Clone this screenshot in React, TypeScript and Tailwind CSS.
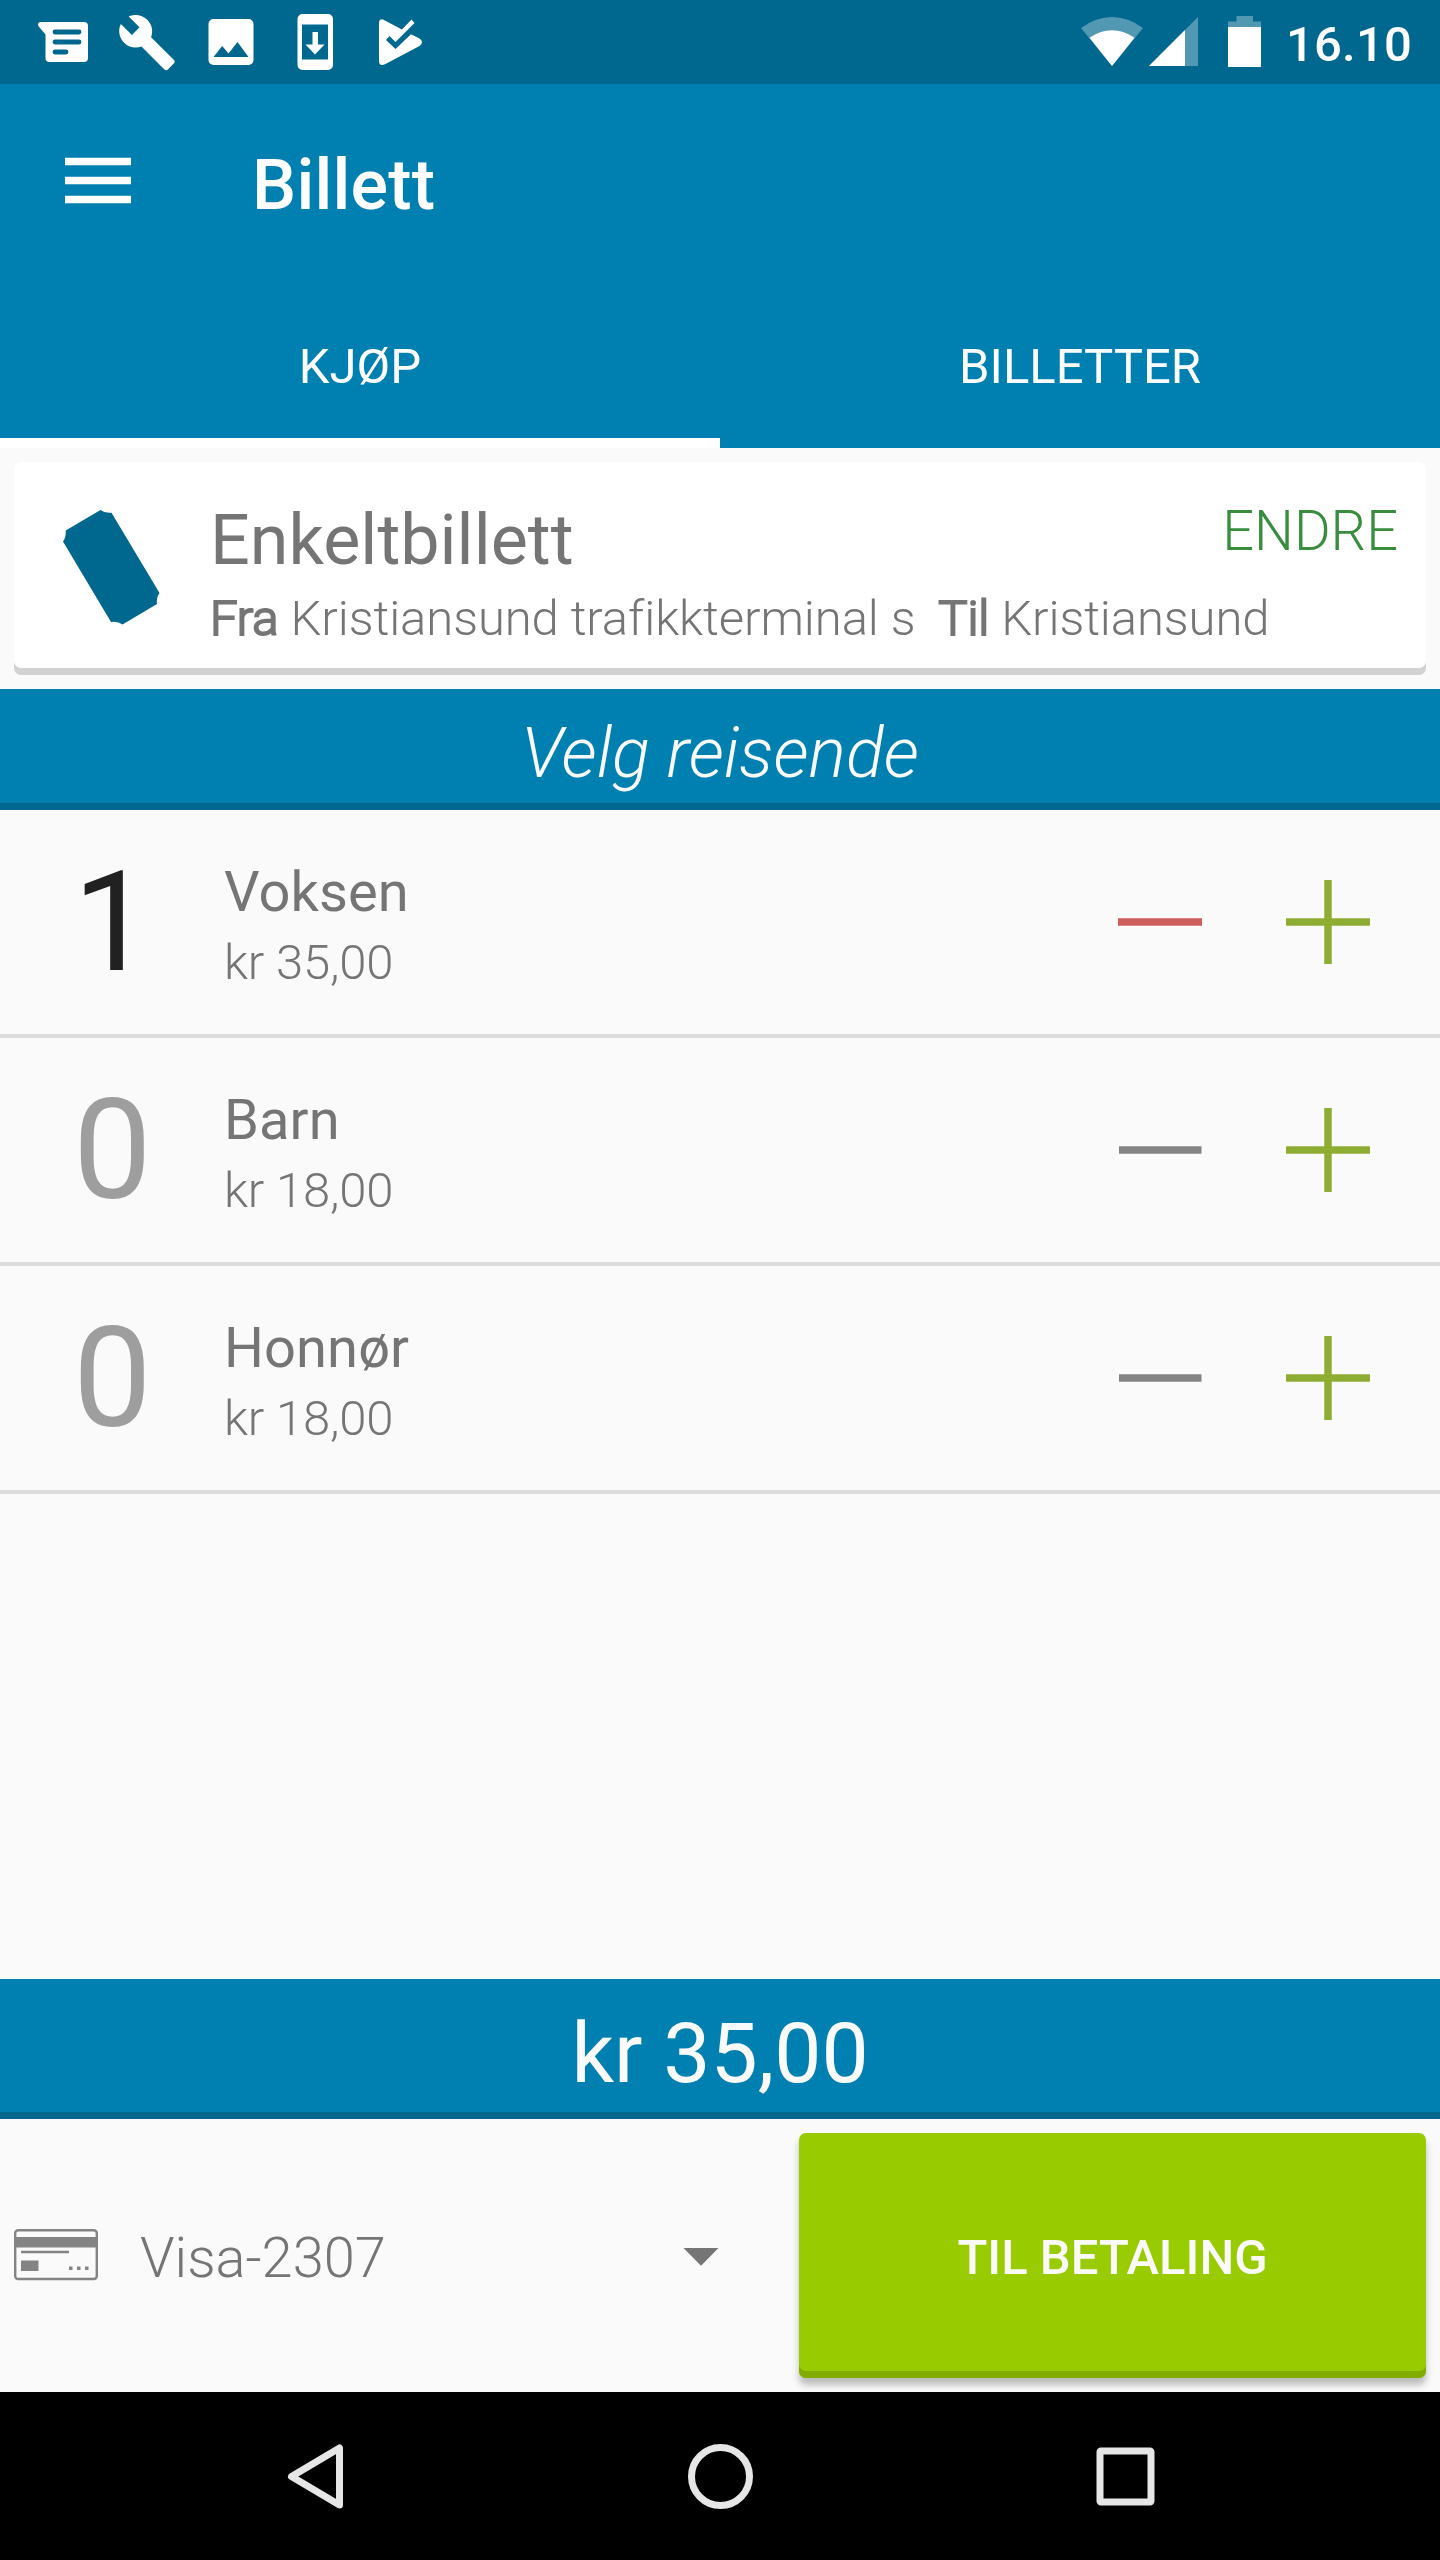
import type { ReactNode } from 'react';

function StatusBar() {
  return (
    <div className="flex h-[84px] items-center bg-[#00688f] text-white">
      <svg width="440" height="84" viewBox="0 0 440 84" fill="currentColor">
        <path d="M38 24.500Q38 22 40.500 22H84a4 4 0 0 1 4 4V58a4 4 0 0 1-4 4H49.500a4 4 0 0 1-4-4V34.500L38.500 26.200Z" />
        <path d="M55 32H79M55 42H79M55 52H66" stroke="#00688f" strokeWidth="4.800" strokeLinecap="round" />
        <g transform="translate(116.800 12.200) scale(2.520)">
          <path d="M22.700 19l-9.100-9.100c.9-2.300.4-5-1.500-6.900-2-2-5-2.400-7.400-1.300L9 6 6 9 1.600 4.700C.4 7.100.9 10.100 2.900 12.100c1.900 1.900 4.600 2.400 6.900 1.500l9.100 9.100c.4.4 1 .4 1.400 0l2.300-2.300c.5-.4.5-1.100.1-1.400z" />
        </g>
        <path fillRule="evenodd" d="M213.500 19h35a5 5 0 0 1 5 5v36a5 5 0 0 1-5 5h-35a5 5 0 0 1-5-5V24a5 5 0 0 1 5-5ZM213.500 57H248.500L237.500 42L228.500 53.500L222.200 46Z" />
        <path fillRule="evenodd" d="M302.500 14H328a5 5 0 0 1 5 5V65a5 5 0 0 1-5 5H302.500a5 5 0 0 1-5-5V19a5 5 0 0 1 5-5ZM302 24.500V59.500H328V24.500Z" />
        <path d="M312.500 32H318V44.500H324.500L315 54.500L305.500 44.500H312.500Z" />
        <path d="M383 19.500L402 29.500L411.500 19.500L414.500 23L395.500 42L389.500 36L386 40L395.500 49L411 34.200L419.500 38.500Q424.500 42 419.500 46L385 64.200Q379 66.500 379 61V22Q379.500 18.500 383 19.500Z" />
      </svg>
      <svg className="ml-[620px]" width="220" height="84" viewBox="0 0 220 84" fill="currentColor">
        <path d="M21 28Q52 6 83 28L52 66Z" opacity=".32" />
        <path d="M29.500 37.700Q52 23 74.500 37.700L52 66Z" />
        <path d="M89 66L138 17V66Z" opacity=".32" />
        <path d="M89 66L125 30V66Z" />
        <path d="M168 21.500H176.500V16H193V21.500H201V27H168Z" opacity=".32" />
        <path d="M168 27H201V67H168Z" />
      </svg>
      <span className="ml-[6px] mt-[6px] text-[49px] font-medium leading-[58px] tracking-[0.200px]">16.10</span>
    </div>
  );
}

function Tab({ active, children }: { active?: boolean; children: ReactNode }) {
  return (
    <div className={`flex h-[168px] w-1/2 flex-col items-center border-b-[10px] text-[49px] leading-[58px] ${active ? 'border-white' : 'border-[#007fb1]'}`}>
      <span className="mt-[58px]">{children}</span>
    </div>
  );
}

function Header() {
  return (
    <header className="h-[364px] bg-[#007fb1] text-white">
      <div className="flex h-[196px]">
        <svg className="ml-[65px] mt-[73px]" width="66" height="47" viewBox="0 0 66 47">
          <path d="M0 4.500H66M0 23.500H66M0 42.500H66" stroke="currentColor" strokeWidth="7.500" />
        </svg>
        <h1 className="ml-[121px] mt-[61px] text-[70px] font-medium leading-[80px] tracking-[0.200px]">Billett</h1>
      </div>
      <div className="flex">
        <Tab active>KJØP</Tab>
        <Tab>BILLETTER</Tab>
      </div>
    </header>
  );
}

function TicketCard() {
  return (
    <section className="mx-[14px] mb-[21px] mt-[14px] flex h-[206px] rounded-[7px] bg-white text-[#757575] shadow-[0_7px_0_#d2d2d2]">
      <svg className="ml-[48px] mt-[47px] shrink-0" width="100" height="117" viewBox="0 0 100 117" fill="#00688f">
        <path d="M38.500 1Q43 4.500 49.500 3.700L97.500 84Q94 89 95 95L60.500 115.500Q56 112 49 113L1 32.500Q4.500 27.500 3.700 21.500Z" />
      </svg>
      <div className="ml-[48px] mr-[28px] grow">
        <div className="flex h-[118px] justify-between">
          <span className="mt-[38px] text-[70px] leading-[80px]">Enkeltbillett</span>
          <span className="mt-[36px] text-[56px] font-light leading-[66px] text-[#388e3c]">ENDRE</span>
        </div>
        <div className="mt-[10px] whitespace-pre text-[49px] font-light leading-[58px] tracking-[-0.070px]">
          <span className="[-webkit-text-stroke:2px_#757575]">Fra</span> Kristiansund trafikkterminal s{'  '}
          <span className="[-webkit-text-stroke:2px_#757575]">Til</span> Kristiansund
        </div>
      </div>
    </section>
  );
}

function Traveller({ count, name, price }: { count: number; name: string; price: string }) {
  const on = count > 0;
  return (
    <li className="flex h-[228px] border-b-4 border-[#dcdcdc] text-[#757575]">
      <span className={`ml-[73px] mt-[30px] w-[80px] text-[140px] leading-[164px] ${on ? 'text-[#212121]' : 'text-[#9e9e9e]'}`}>{count}</span>
      <div className="ml-[71px]">
        <div className="mt-[49px] text-[56px] leading-[66px] tracking-[0.100px]">{name}</div>
        <div className="mt-[9px] text-[49px] font-light leading-[58px] tracking-[-0.150px]">{price}</div>
      </div>
      <div className="ml-auto mr-[70px] mt-[70px] flex gap-[84px]">
        <svg width="84" height="84" viewBox="0 0 84 84">
          <path d={on ? 'M0 42H84' : 'M1 42H83.5'} stroke={on ? '#cd5c5c' : '#848484'} strokeWidth="7.500" />
        </svg>
        <svg width="84" height="84" viewBox="0 0 84 84">
          <path d="M0 42H84M42 0V84" stroke="#90ad33" strokeWidth="7.500" />
        </svg>
      </div>
    </li>
  );
}

function PaymentRow() {
  return (
    <div className="flex h-[273px]">
      <svg className="ml-[14px] mt-[110px]" width="84" height="52" viewBox="0 0 84 52" fill="#848484">
        <rect x="1.200" y="1.200" width="81.600" height="48.800" rx="3" fill="none" stroke="#848484" strokeWidth="2.400" />
        <path d="M1 8H83V18.500H1ZM7 21.700H55V24.200H7ZM7 31.500H24.500V42H7ZM55 37.500H58.500V41H55ZM63 37.500H66.500V41H63ZM71 37.500H74.500V41H71Z" />
      </svg>
      <span className="ml-[42px] mt-[106px] w-[300px] text-[56px] font-light leading-[66px] text-[#757575]">Visa-2307</span>
      <svg className="ml-[243px] mt-[129px]" width="36" height="19" viewBox="0 0 36 19">
        <path d="M0.500 0H35.500L18 17.700Z" fill="#757575" />
      </svg>
      <button className="ml-auto mr-[14px] mt-[14px] flex h-[245px] w-[627px] items-start justify-center rounded-[7px] bg-[#99cc00] text-[49px] font-medium leading-[58px] text-[#fafafa] shadow-[inset_0_-7px_0_#82ad00,0_7px_7px_rgba(0,0,0,.25)]">
        <span className="mt-[96px]">TIL BETALING</span>
      </button>
    </div>
  );
}

export default function App() {
  return (
    <div className="flex h-[2560px] w-[1440px] flex-col overflow-hidden bg-[#fafafa] font-[Roboto,sans-serif]">
      <StatusBar />
      <Header />
      <TicketCard />
      <h2 className="h-[121px] border-b-[7px] border-[#00688f] bg-[#007fb1] pt-[23px] text-center text-[70px] font-light italic leading-[82px] text-[#fafafa]">Velg reisende</h2>
      <ul>
        <Traveller count={1} name="Voksen" price="kr 35,00" />
        <Traveller count={0} name="Barn" price="kr 18,00" />
        <Traveller count={0} name="Honnør" price="kr 18,00" />
      </ul>
      <footer className="mt-auto">
        <div className="h-[140px] border-b-[7px] border-[#00688f] bg-[#007fb1] pt-[25px] text-center text-[84px] leading-[99px] text-[#fafafa]">kr 35,00</div>
        <PaymentRow />
        <nav className="flex h-[168px] bg-black">
          <svg className="w-full" height="168" viewBox="0 0 1440 168" fill="none" stroke="#e6e6e6" strokeWidth="7">
            <path d="M339.500 56V113L291.500 84.500Z" strokeLinejoin="round" />
            <circle cx="720.500" cy="84.500" r="29" />
            <rect x="1100" y="59" width="51" height="51" rx="1" />
          </svg>
        </nav>
      </footer>
    </div>
  );
}
